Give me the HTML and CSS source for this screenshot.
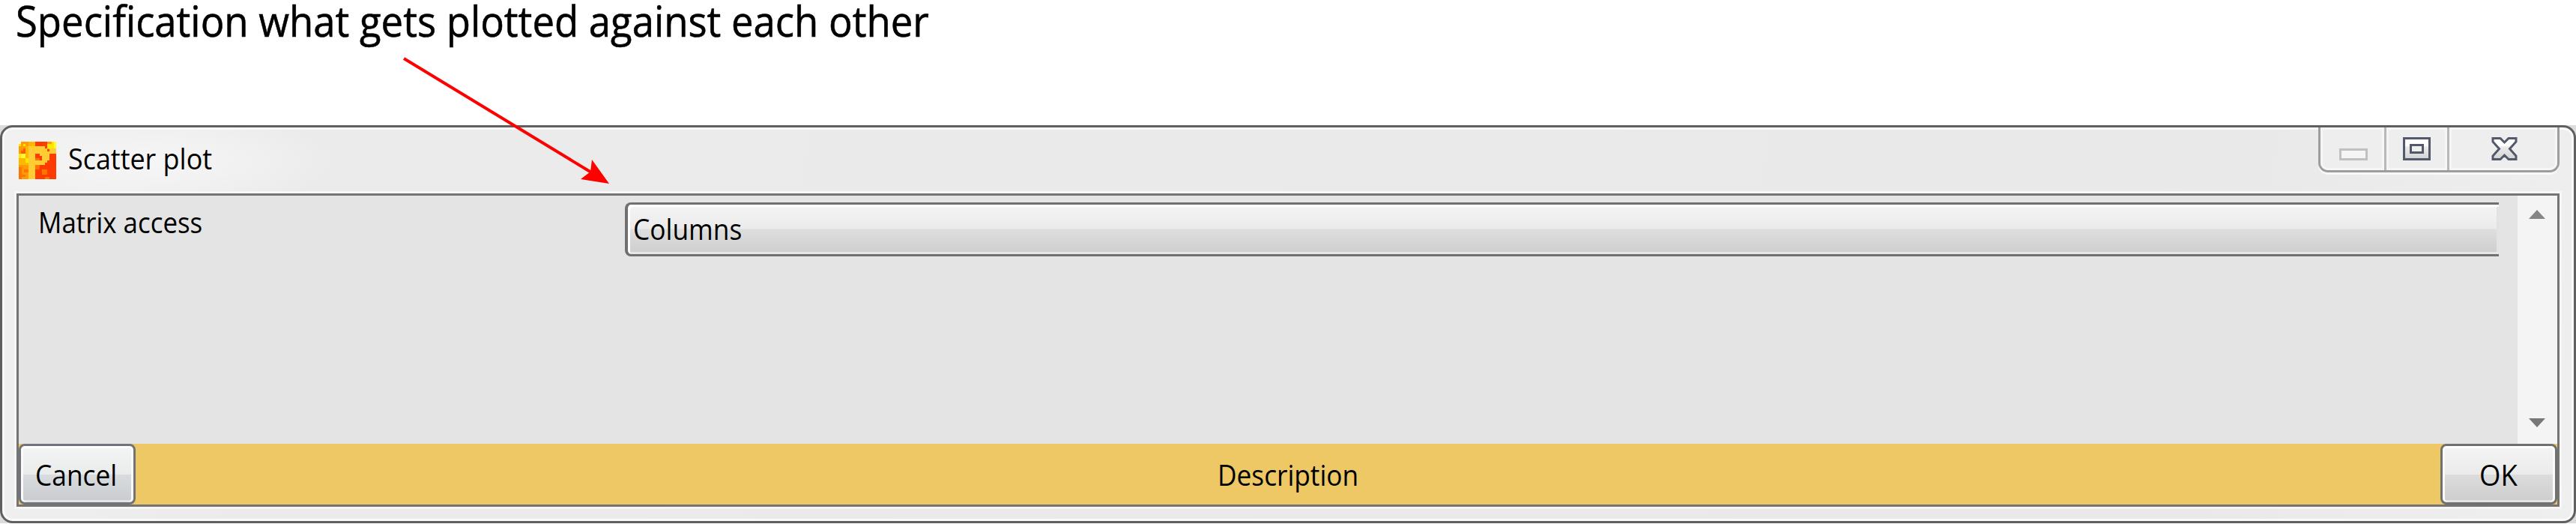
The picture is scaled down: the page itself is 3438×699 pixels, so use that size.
FILE: index.html
```
<!DOCTYPE html>
<html lang="en">
<head>
<meta charset="utf-8">
<title>Scatter plot</title>
<link rel="stylesheet" href="styles.css">
</head>
<body>
<h1 class="caption"><span class="fit fit-caption">Specification what gets plotted against each other</span></h1>
<section class="window">
  <div class="frame">
    <header class="titlebar">
      <svg class="app-icon" width="50" height="50" viewBox="0 0 50 50" shape-rendering="crispEdges">
        <rect width="50" height="50" fill="#ff9a00"/>
        <path fill="#ff3c00" d="M22 0H38V6H44V16H50V50H22z"/>
        <path fill="#ff5a00" d="M3 12H9V16H3zM6 9H9V12H6z"/>
        <path fill="#ffb800" d="M13 0H22V6H13zM9 6H13V31H9zM0 22H9V31H0zM38 6H44V10H38z"/>
        <path fill="#ffe800" d="M0 3H3V6H0zM0 16H3V22H0zM9 22H13V28H9zM44 0H50V9H44zM38 3H44V9H38zM6 3H9V6H6z"/>
        <path fill="#fff82a" d="M3 16H9V22H3zM47 0H50V9H47z"/>
        <path fill="#fffbc8" d="M0 0H3V3H0z"/>
        <path fill="#ff7400" d="M0 34H4V50H0zM7 37H13V41H7zM22 31H28V37H22zM31 37H38V44H31zM3 44H9V47H3zM22 22H28V25H22zM35 47H41V50H35z"/>
        <path fill="#ffcc33" d="M41 9H50V16H41z"/>
        <path fill="#ffcc33" d="M13 6H35V9H38V13H41V25H38V28H35V31H22V50H13zM22 16V25H31V19H28V16z" fill-rule="evenodd"/>
      </svg>
      <span class="title fit fit-title">Scatter plot</span>
      <div class="controls">
        <span class="control minimize"><svg width="38" height="16" viewBox="0 0 38 16"><rect x="1.5" y="1.5" width="35" height="13" fill="#f5f5f5" stroke="#c0c0c0" stroke-width="3"/></svg></span>
        <span class="control maximize"><svg width="37" height="31" viewBox="0 0 37 31"><defs><linearGradient id="g" x2="0" y2="1"><stop offset=".35" stop-color="#fff"/><stop offset=".4" stop-color="#ececec"/><stop offset="1" stop-color="#d2d2d2"/></linearGradient></defs><rect x="1.5" y="1.5" width="34" height="28" fill="url(#g)" stroke="#53586b" stroke-width="3"/><rect x="10.5" y="10.5" width="16" height="10" fill="#efefef" stroke="#53586b" stroke-width="3"/></svg></span>
        <span class="control close"><svg width="35" height="31" viewBox="0 0 35 31"><path d="M2 1.5H12L17.500 7L23 1.500H33V6L24.500 15.500L33 25V29.500H23L17.500 24L12 29.500H2V25L10.500 15.500L2 6z" fill="url(#g)" stroke="#53586b" stroke-width="3"/></svg></span>
      </div>
    </header>
    <main class="client">
      <div class="body">
        <div class="row">
          <label class="label"><span class="fit fit-label">Matrix access</span></label>
          <div class="select"><span class="fit fit-select">Columns</span></div>
        </div>
        <div class="scrollbar">
          <svg width="22" height="12" viewBox="0 0 22 12"><path d="M11 0L22 12H0z" fill="#858585"/></svg>
          <svg width="22" height="12" viewBox="0 0 22 12"><path d="M0 0H22L11 12z" fill="#777"/></svg>
        </div>
      </div>
      <footer class="footer">
        <button class="button cancel"><span class="fit fit-cancel">Cancel</span></button>
        <div class="description"><span class="fit fit-desc">Description</span></div>
        <button class="button ok"><span class="fit fit-ok">OK</span></button>
      </footer>
    </main>
  </div>
</section>
<svg class="arrow" width="280" height="172" viewBox="0 0 280 172"><path d="M1 2L252 154.500" stroke="#f00" stroke-width="4"/><path d="M275 169L252 137L250 153L237 163z" fill="#f00"/></svg>
</body>
</html>
```
FILE: styles.css
```
* { box-sizing: border-box; }
body {
  margin: 0;
  width: 3438px;
  height: 699px;
  overflow: hidden;
  display: flex;
  flex-direction: column;
  background: #fff;
  color: #000;
  font: 38px/50px "Open Sans", "Noto Sans", sans-serif;
}
.caption {
  margin: 0;
  height: 167px;
  padding-left: 21px;
  font-size: 56px;
  font-weight: 400;
  line-height: 55px;
  -webkit-text-stroke: .6px #000;
}
.fit { display: inline-block; transform-origin: 0 50%; white-space: nowrap; }
.fit-caption { transform: scaleX(.94); }
.fit-title { transform: scaleX(.945); }
.fit-label { transform: scaleX(.918); }
.fit-select { transform: scaleX(.93); }
.fit-cancel { transform: scaleX(.93); }
.fit-desc { transform: scaleX(.927); }
.fit-ok { transform: scaleX(.96); }
.window {
  height: 531px;
  background: #dcdcdc;
}
.frame {
  height: 531px;
  padding: 0 19px 19px;
  border: 3px solid #5f5f5f;
  border-radius: 17px;
  box-shadow: inset 0 0 0 3px #f9f9f9;
  background:
    radial-gradient(260px 60px at 190px 45px, #f6f6f6, #f6f6f600),
    linear-gradient(100deg, #f0f0f0, #ebebeb 12%, #e9e9e9 85%, #efefef);
}
.titlebar { display: flex; height: 88px; }
.app-icon { margin: 19px 16px 0 3px; }
.title { margin-top: 16px; }
.controls {
  display: flex;
  width: 322px;
  height: 60px;
  margin-left: auto;
  border: 3px solid #9d9d9d;
  border-top: 0;
  border-radius: 0 0 13px 13px;
  box-shadow: 0 3px 0 #f8f8f8;
  background: #eee;
}
.control { box-shadow: inset 0 0 0 3px #f6f6f6; }
.control svg { display: block; }
.minimize { width: 88px; border-right: 3px solid #b8b8b8; border-bottom-left-radius: 10px; padding: 28px 0 0 25px; }
.maximize { width: 84px; border-right: 3px solid #b8b8b8; padding: 13px 0 0 22px; }
.close { width: 144px; padding: 13px 0 0 56px; border-bottom-right-radius: 10px; }
.client {
  height: 418px;
  border: 3px solid #747474;
  box-shadow: 0 0 0 3px #f6f6f6;
  background: #e4e4e4;
}
.body { display: flex; height: 331px; }
.row { display: flex; width: 3335px; padding: 9px 25px 0 0; }
.label { width: 809px; padding: 1px 0 0 26px; }
.select {
  flex: 1;
  height: 72px;
  padding: 7px 0 0 7px;
  border: solid #707070;
  border-width: 3px 0 3px 4px;
  border-radius: 8px 0 0 8px;
  box-shadow: inset 3px 3px 0 #fff, inset 0 -3px 0 #e6e6e6, inset -3px 0 0 #e2e2e2;
  background: linear-gradient(#f4f4f4, #ebebeb 48%, #dedede 50%, #cdcdcd);
}
.scrollbar {
  display: flex;
  flex-direction: column;
  justify-content: space-between;
  width: 53px;
  padding: 19px 0 22px 15px;
  background: #f4f4f4;
}
.footer { display: flex; height: 81px; background: #edc865; }
.button {
  width: 156px;
  height: 81px;
  padding: 1px 0 0;
  border: 3px solid #70747a;
  border-radius: 8px;
  box-shadow: inset 0 3px 0 #fff, inset 3px 0 0 #fafafa, inset -3px 0 0 #fafafa, inset 0 -3px 0 #e4e4e4;
  background: linear-gradient(#f4f4f4, #ebebeb 50%, #dcdcdc 51%, #cdcdcd);
  color: inherit;
  font: inherit;
  text-align: left;
}
.cancel { padding-left: 19px; background: linear-gradient(#f3f4f4, #eaecec 50%, #d9dcde 51%, #c9cccf); }
.ok { padding-left: 49px; border-color: #707070; }
.description { flex: 1; padding: 16px 0 0 1444px; }
.arrow { position: absolute; left: 538px; top: 76px; }
```
